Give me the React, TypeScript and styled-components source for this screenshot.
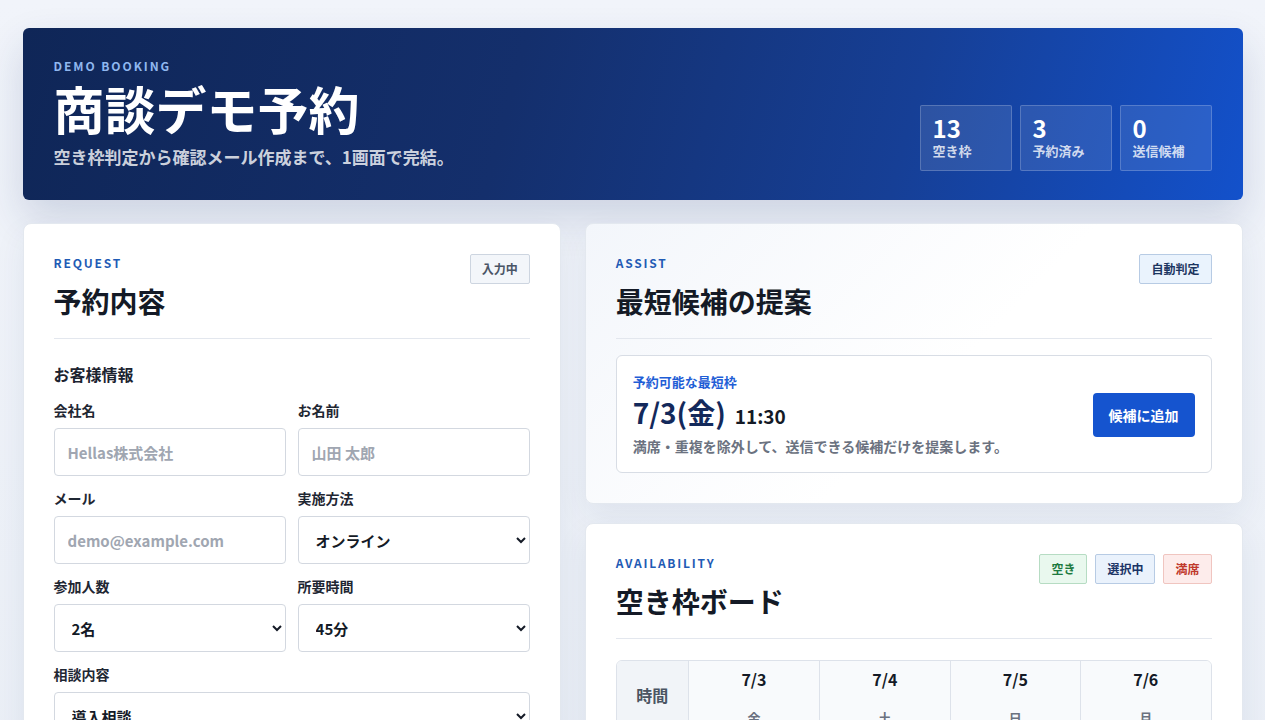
import React from 'react';
import styled, { createGlobalStyle, css } from 'styled-components';

type Tone = 'neutral' | 'info' | 'open' | 'selected' | 'full';

const TONES: Record<Tone, { bg: string; border: string; color: string }> = {
  neutral: { bg: '#f3f6fa', border: '#cdd5e0', color: '#4a5566' },
  info: { bg: '#eaf3fd', border: '#b7cbe4', color: '#1b3560' },
  open: { bg: '#e9f8ee', border: '#b6dcc3', color: '#1d7a40' },
  selected: { bg: '#eaf2fc', border: '#b7cbe4', color: '#1b3466' },
  full: { bg: '#fdeceb', border: '#f0c5c0', color: '#c0392b' },
};

const STATS = [
  { value: 13, label: '空き枠' },
  { value: 3, label: '予約済み' },
  { value: 0, label: '送信候補' },
];

const DAYS = [
  { date: '7/3', week: '金' },
  { date: '7/4', week: '土' },
  { date: '7/5', week: '日' },
  { date: '7/6', week: '月' },
];

type SlotState = 'open' | 'selected' | 'full';

const SLOTS: { time: string; cells: SlotState[] }[] = [
  { time: '10:00', cells: ['full', 'open', 'open', 'full'] },
  { time: '11:30', cells: ['selected', 'open', 'open', 'open'] },
  { time: '13:00', cells: ['open', 'full', 'open', 'open'] },
  { time: '15:00', cells: ['open', 'open', 'open', 'open'] },
];

const SLOT_LABEL: Record<SlotState, string> = {
  open: '空き',
  selected: '選択中',
  full: '満席',
};

const GlobalStyle = createGlobalStyle`
  * {
    box-sizing: border-box;
  }

  body {
    margin: 0;
    font-family: "Noto Sans CJK JP", "Noto Sans", sans-serif;
    font-weight: 700;
    color: #141a26;
    background: linear-gradient(180deg, #f1f4fa 0%, #e8edf5 100%);
    min-height: 100vh;
  }
`;

const App: React.FC = () => {
  return (
    <>
      <GlobalStyle />
      <Page>
        <Hero>
          <HeroText>
            <HeroEyebrow>DEMO BOOKING</HeroEyebrow>
            <HeroTitle>商談デモ予約</HeroTitle>
            <HeroLead>空き枠判定から確認メール作成まで、1画面で完結。</HeroLead>
          </HeroText>
          <StatList>
            {STATS.map((stat) => (
              <Stat key={stat.label}>
                <StatValue>{stat.value}</StatValue>
                <StatLabel>{stat.label}</StatLabel>
              </Stat>
            ))}
          </StatList>
        </Hero>

        <Columns>
          <Card>
            <CardHead>
              <div>
                <Eyebrow>REQUEST</Eyebrow>
                <CardTitle>予約内容</CardTitle>
              </div>
              <BadgeRow>
                <Badge $tone="neutral">入力中</Badge>
              </BadgeRow>
            </CardHead>

            <SectionTitle>お客様情報</SectionTitle>
            <FormGrid>
              <Field>
                <Label>会社名</Label>
                <Input placeholder="Hellas株式会社" />
              </Field>
              <Field>
                <Label>お名前</Label>
                <Input placeholder="山田 太郎" />
              </Field>
              <Field>
                <Label>メール</Label>
                <Input placeholder="demo@example.com" />
              </Field>
              <Field>
                <Label>実施方法</Label>
                <Select defaultValue="online">
                  <option value="online">オンライン</option>
                  <option value="visit">訪問</option>
                </Select>
              </Field>
              <Field>
                <Label>参加人数</Label>
                <Select defaultValue="2">
                  <option value="1">1名</option>
                  <option value="2">2名</option>
                  <option value="3">3名</option>
                </Select>
              </Field>
              <Field>
                <Label>所要時間</Label>
                <Select defaultValue="45">
                  <option value="30">30分</option>
                  <option value="45">45分</option>
                  <option value="60">60分</option>
                </Select>
              </Field>
              <Field $wide>
                <Label>相談内容</Label>
                <Select defaultValue="intro">
                  <option value="intro">導入相談</option>
                  <option value="price">料金相談</option>
                </Select>
              </Field>
              <Field $wide>
                <Label>ご要望</Label>
                <TextArea placeholder="事前に共有したい内容があればご記入ください。" />
              </Field>
            </FormGrid>
          </Card>

          <Stack>
            <Card $soft>
              <CardHead>
                <div>
                  <Eyebrow>ASSIST</Eyebrow>
                  <CardTitle>最短候補の提案</CardTitle>
                </div>
                <BadgeRow>
                  <Badge $tone="info">自動判定</Badge>
                </BadgeRow>
              </CardHead>

              <Suggest>
                <SuggestBody>
                  <SuggestLabel>予約可能な最短枠</SuggestLabel>
                  <SuggestDate>
                    7/3(金)<SuggestTime>11:30</SuggestTime>
                  </SuggestDate>
                  <SuggestNote>満席・重複を除外して、送信できる候補だけを提案します。</SuggestNote>
                </SuggestBody>
                <PrimaryButton type="button">候補に追加</PrimaryButton>
              </Suggest>
            </Card>

            <Card>
              <CardHead>
                <div>
                  <Eyebrow>AVAILABILITY</Eyebrow>
                  <CardTitle>空き枠ボード</CardTitle>
                </div>
                <BadgeRow>
                  <Badge $tone="open">空き</Badge>
                  <Badge $tone="selected">選択中</Badge>
                  <Badge $tone="full">満席</Badge>
                </BadgeRow>
              </CardHead>

              <Board>
                <TimeHead>時間</TimeHead>
                {DAYS.map((day) => (
                  <DayHead key={day.date}>
                    <DayDate>{day.date}</DayDate>
                    <DayWeek>{day.week}</DayWeek>
                  </DayHead>
                ))}
                {SLOTS.map((row) => (
                  <React.Fragment key={row.time}>
                    <TimeCell>{row.time}</TimeCell>
                    {row.cells.map((state, idx) => (
                      <SlotCell key={idx}>
                        <Slot $state={state} type="button" disabled={state === 'full'}>
                          {SLOT_LABEL[state]}
                        </Slot>
                      </SlotCell>
                    ))}
                  </React.Fragment>
                ))}
              </Board>
            </Card>
          </Stack>
        </Columns>
      </Page>
    </>
  );
};

// --- Styled Components ---

const Page = styled.div`
  max-width: 1220px;
  margin: 0 auto;
  padding: 28px 0 40px;
`;

const Hero = styled.header`
  display: flex;
  justify-content: space-between;
  align-items: flex-end;
  padding: 30px 31px 29px;
  border-radius: 6px;
  color: #ffffff;
  background: linear-gradient(105deg, #0f2657 0%, #142f6c 40%, #163f96 72%, #1351cb 100%);
  box-shadow: 0 18px 40px rgba(24, 52, 112, 0.16);
`;

const HeroText = styled.div`
  display: flex;
  flex-direction: column;
`;

const HeroEyebrow = styled.div`
  font-size: 12px;
  line-height: 16px;
  letter-spacing: 0.16em;
  color: #8fb7ef;
`;

const HeroTitle = styled.h1`
  margin: 4px 0 0;
  font-size: 51px;
  line-height: 60px;
  font-weight: 700;
`;

const HeroLead = styled.p`
  margin: 5px 0 0;
  font-size: 17px;
  line-height: 28px;
  color: rgba(255, 255, 255, 0.8);
`;

const StatList = styled.div`
  display: flex;
  gap: 8px;
`;

const Stat = styled.div`
  width: 92px;
  padding: 8px 12px 11px;
  border: 1px solid rgba(255, 255, 255, 0.2);
  border-radius: 2px;
  background: rgba(255, 255, 255, 0.1);
`;

const StatValue = styled.div`
  font-size: 24px;
  line-height: 28px;
`;

const StatLabel = styled.div`
  font-size: 13px;
  line-height: 17px;
  color: rgba(255, 255, 255, 0.78);
`;

const Columns = styled.main`
  display: grid;
  grid-template-columns: minmax(0, 45fr) minmax(0, 55fr);
  gap: 24px;
  align-items: start;
  margin-top: 23px;
`;

const Stack = styled.div`
  display: flex;
  flex-direction: column;
  gap: 19px;
`;

const Card = styled.section<{ $soft?: boolean }>`
  padding: 30px;
  border: 1px solid #e3e8ef;
  border-radius: 8px;
  background: #ffffff;
  box-shadow: 0 12px 32px rgba(30, 50, 95, 0.07);

  ${(props) =>
    props.$soft &&
    css`
      background: linear-gradient(135deg, #f3f6fb 0%, #ffffff 55%);
    `}
`;

const CardHead = styled.div`
  display: flex;
  justify-content: space-between;
  align-items: flex-start;
  padding-bottom: 19px;
  margin-bottom: 16px;
  border-bottom: 1px solid #e3e7ee;
`;

const Eyebrow = styled.div`
  font-size: 12px;
  line-height: 18px;
  letter-spacing: 0.15em;
  color: #1f5bb5;
`;

const CardTitle = styled.h2`
  margin: 11px 0 0;
  font-size: 28px;
  line-height: 36px;
  font-weight: 700;
  color: #141a26;
`;

const BadgeRow = styled.div`
  display: flex;
  gap: 8px;
`;

const Badge = styled.span<{ $tone: Tone }>`
  display: inline-block;
  padding: 6px 11px;
  font-size: 12px;
  line-height: 16px;
  border-radius: 2px;
  border: 1px solid ${(props) => TONES[props.$tone].border};
  background: ${(props) => TONES[props.$tone].bg};
  color: ${(props) => TONES[props.$tone].color};
`;

const SectionTitle = styled.h3`
  margin: 25px 0 15px;
  font-size: 16px;
  line-height: 21px;
  font-weight: 700;
  color: #1c2330;
`;

const FormGrid = styled.div`
  display: grid;
  grid-template-columns: repeat(2, minmax(0, 1fr));
  gap: 12px;
`;

const Field = styled.label<{ $wide?: boolean }>`
  display: flex;
  flex-direction: column;
  gap: 8px;
  grid-column: ${(props) => (props.$wide ? '1 / -1' : 'auto')};
`;

const Label = styled.span`
  font-size: 14px;
  line-height: 20px;
  color: #1f2733;
`;

const controlBase = css`
  width: 100%;
  height: 48px;
  border: 1px solid #d3d8e0;
  border-radius: 4px;
  background: #ffffff;
  font-family: inherit;
  font-weight: 700;
  font-size: 15px;
  color: #141a26;
  outline: none;
`;

const Input = styled.input`
  ${controlBase};
  padding: 0 13px;

  &::placeholder {
    color: #a0a6b1;
  }
`;

const Select = styled.select`
  ${controlBase};
  padding: 0 8px 0 13px;
`;

const TextArea = styled.textarea`
  ${controlBase};
  height: 110px;
  padding: 12px 13px;
  resize: vertical;

  &::placeholder {
    color: #a0a6b1;
  }
`;

const Suggest = styled.div`
  display: flex;
  align-items: center;
  justify-content: space-between;
  gap: 16px;
  padding: 17px 16px 15px;
  border: 1px solid #d8dde5;
  border-radius: 6px;
  background: #ffffff;
`;

const SuggestBody = styled.div`
  display: flex;
  flex-direction: column;
`;

const SuggestLabel = styled.div`
  font-size: 13px;
  line-height: 17px;
  color: #1f5ed6;
`;

const SuggestDate = styled.div`
  margin-top: 5px;
  font-size: 28px;
  line-height: 34px;
  color: #13295b;
  display: flex;
  align-items: baseline;
`;

const SuggestTime = styled.span`
  margin-left: 9px;
  font-size: 19px;
  color: #141a26;
`;

const SuggestNote = styled.p`
  margin: 3px 0 0;
  font-size: 14px;
  line-height: 21px;
  color: #6b7280;
`;

const PrimaryButton = styled.button`
  flex-shrink: 0;
  padding: 12px 16px;
  border: none;
  border-radius: 4px;
  background: #1554cf;
  color: #ffffff;
  font-family: inherit;
  font-weight: 700;
  font-size: 14px;
  line-height: 20px;
  cursor: pointer;
`;

const Board = styled.div`
  display: grid;
  grid-template-columns: 72px repeat(4, minmax(0, 1fr));
  margin-top: 21px;
  border: 1px solid #dde2ea;
  border-radius: 6px;
  overflow: hidden;
`;

const TimeHead = styled.div`
  display: flex;
  align-items: center;
  justify-content: center;
  padding-bottom: 10px;
  font-size: 16px;
  color: #4b5563;
  background: #f1f4f8;
  border-right: 1px solid #dde2ea;
  border-bottom: 1px solid #dde2ea;
`;

const DayHead = styled.div`
  display: flex;
  flex-direction: column;
  align-items: center;
  padding: 7px 8px 12px;
  background: #f8fafc;
  border-bottom: 1px solid #dde2ea;

  & + & {
    border-left: 1px solid #dde2ea;
  }
`;

const DayDate = styled.div`
  font-size: 16px;
  line-height: 22px;
  color: #141a26;
`;

const DayWeek = styled.div`
  margin-top: 19px;
  font-size: 13px;
  line-height: 18px;
  color: #6b7280;
`;

const TimeCell = styled.div`
  display: flex;
  align-items: center;
  justify-content: center;
  padding: 10px 0;
  font-size: 14px;
  color: #4b5563;
  background: #f1f4f8;
  border-right: 1px solid #dde2ea;
  border-bottom: 1px solid #e6e9ef;
`;

const SlotCell = styled.div`
  padding: 8px;
  border-bottom: 1px solid #e6e9ef;

  & + & {
    border-left: 1px solid #e6e9ef;
  }
`;

const Slot = styled.button<{ $state: SlotState }>`
  width: 100%;
  padding: 8px 0;
  border-radius: 4px;
  font-family: inherit;
  font-weight: 700;
  font-size: 13px;
  cursor: pointer;
  border: 1px solid ${(props) => TONES[props.$state].border};
  background: ${(props) => TONES[props.$state].bg};
  color: ${(props) => TONES[props.$state].color};
`;

export default App;
